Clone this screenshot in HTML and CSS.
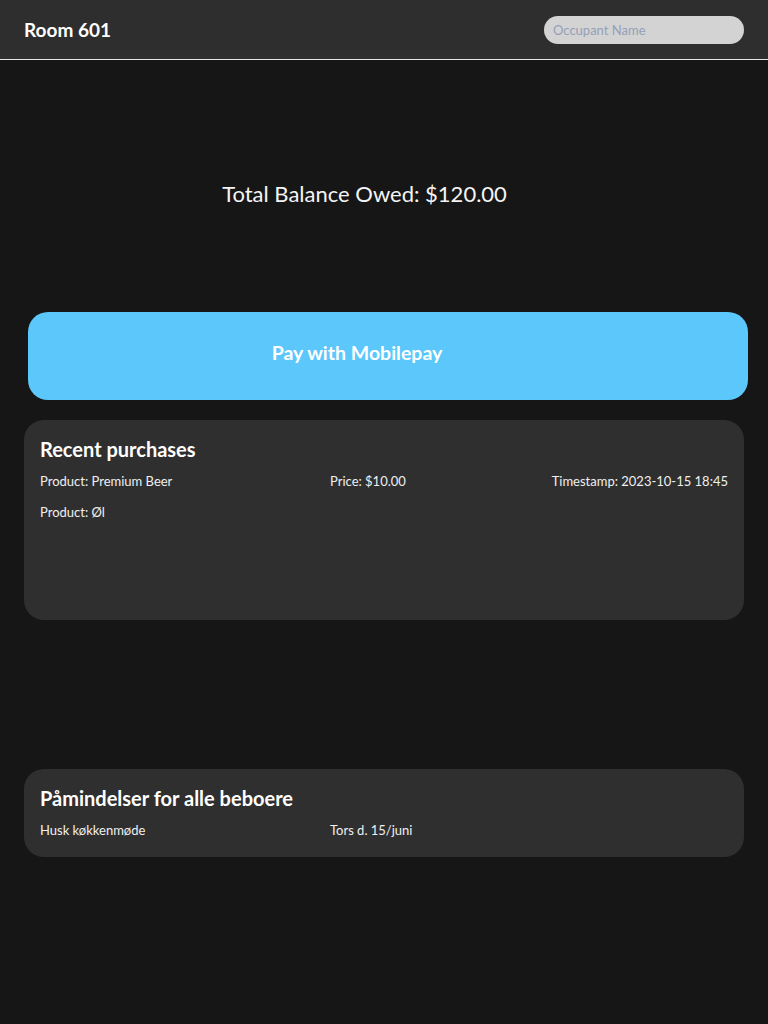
FILE: index.html
```html
<!DOCTYPE html>
<html lang="da">
<head>
<meta charset="utf-8">
<title>Room 601</title>
<link rel="stylesheet" href="styles.css">
</head>
<body>
<header class="topbar">
  <h1 class="room">Room 601</h1>
  <input class="occupant" type="text" placeholder="Occupant Name">
</header>
<main class="content">
  <section class="balance">
    <p class="balance-text">Total Balance Owed: $120.00</p>
  </section>
  <button class="pay">Pay with Mobilepay</button>
  <section class="card purchases">
    <h2 class="card-title">Recent purchases</h2>
    <div class="row">
      <span class="c1">Product: Premium Beer</span>
      <span class="c2">Price: $10.00</span>
      <span class="c3">Timestamp: 2023-10-15 18:45</span>
    </div>
    <div class="row">
      <span class="c1">Product: Øl</span>
    </div>
  </section>
  <section class="card reminders">
    <h2 class="card-title">Påmindelser for alle beboere</h2>
    <div class="row">
      <span class="c1">Husk køkkenmøde</span>
      <span class="c2">Tors d. 15/juni</span>
    </div>
  </section>
</main>
</body>
</html>
```

FILE: styles.css
```css
* { box-sizing: border-box; }
html, body { margin: 0; padding: 0; }
body {
  background: #161616;
  color: #f2f2f2;
  font-family: "Lato", "Noto Sans", sans-serif;
  min-height: 1024px;
}
.topbar {
  height: 60px;
  background: #2e2e2e;
  border-bottom: 1px solid #e6e6e6;
  display: flex;
  align-items: center;
  justify-content: space-between;
  padding: 0 24px;
}
.room {
  margin: 0;
  font-size: 19px;
  font-weight: 700;
  color: #ffffff;
}
.occupant {
  width: 200px;
  height: 28px;
  border: none;
  border-radius: 14px;
  background: #d3d3d3;
  padding: 0 9px;
  font-family: inherit;
  font-size: 13px;
  color: #333;
  outline: none;
}
.occupant::placeholder { color: #93a0b8; }
.content {
  display: flex;
  flex-direction: column;
  padding: 0 24px;
}
.balance {
  height: 252px;
  padding-top: 120px;
  padding-right: 39px;
  text-align: center;
}
.balance-text {
  margin: 0;
  font-size: 22px;
  line-height: 28px;
  color: #f4f4f4;
}
.pay {
  margin: 0 -4px 0 4px;
  height: 88px;
  border: none;
  border-radius: 20px;
  background: #5bc7fb;
  color: #ffffff;
  font-family: inherit;
  font-size: 19.5px;
  font-weight: 700;
  padding: 0 62px 7px 0;
  cursor: pointer;
}
.card {
  background: #2f2f2f;
  border-radius: 20px;
  padding: 17px 16px 16px;
}
.purchases {
  margin-top: 20px;
  min-height: 200px;
}
.reminders {
  margin-top: 149px;
  min-height: 88px;
}
.card-title {
  margin: 0 0 12px;
  font-size: 20px;
  line-height: 24px;
  font-weight: 700;
  color: #ffffff;
}
.row {
  display: grid;
  grid-template-columns: 290px 1fr auto;
  font-size: 13px;
  line-height: 17px;
  margin-bottom: 14px;
  color: #f0f0f0;
}
.row:last-child { margin-bottom: 0; }
.c3 { text-align: right; }
```
